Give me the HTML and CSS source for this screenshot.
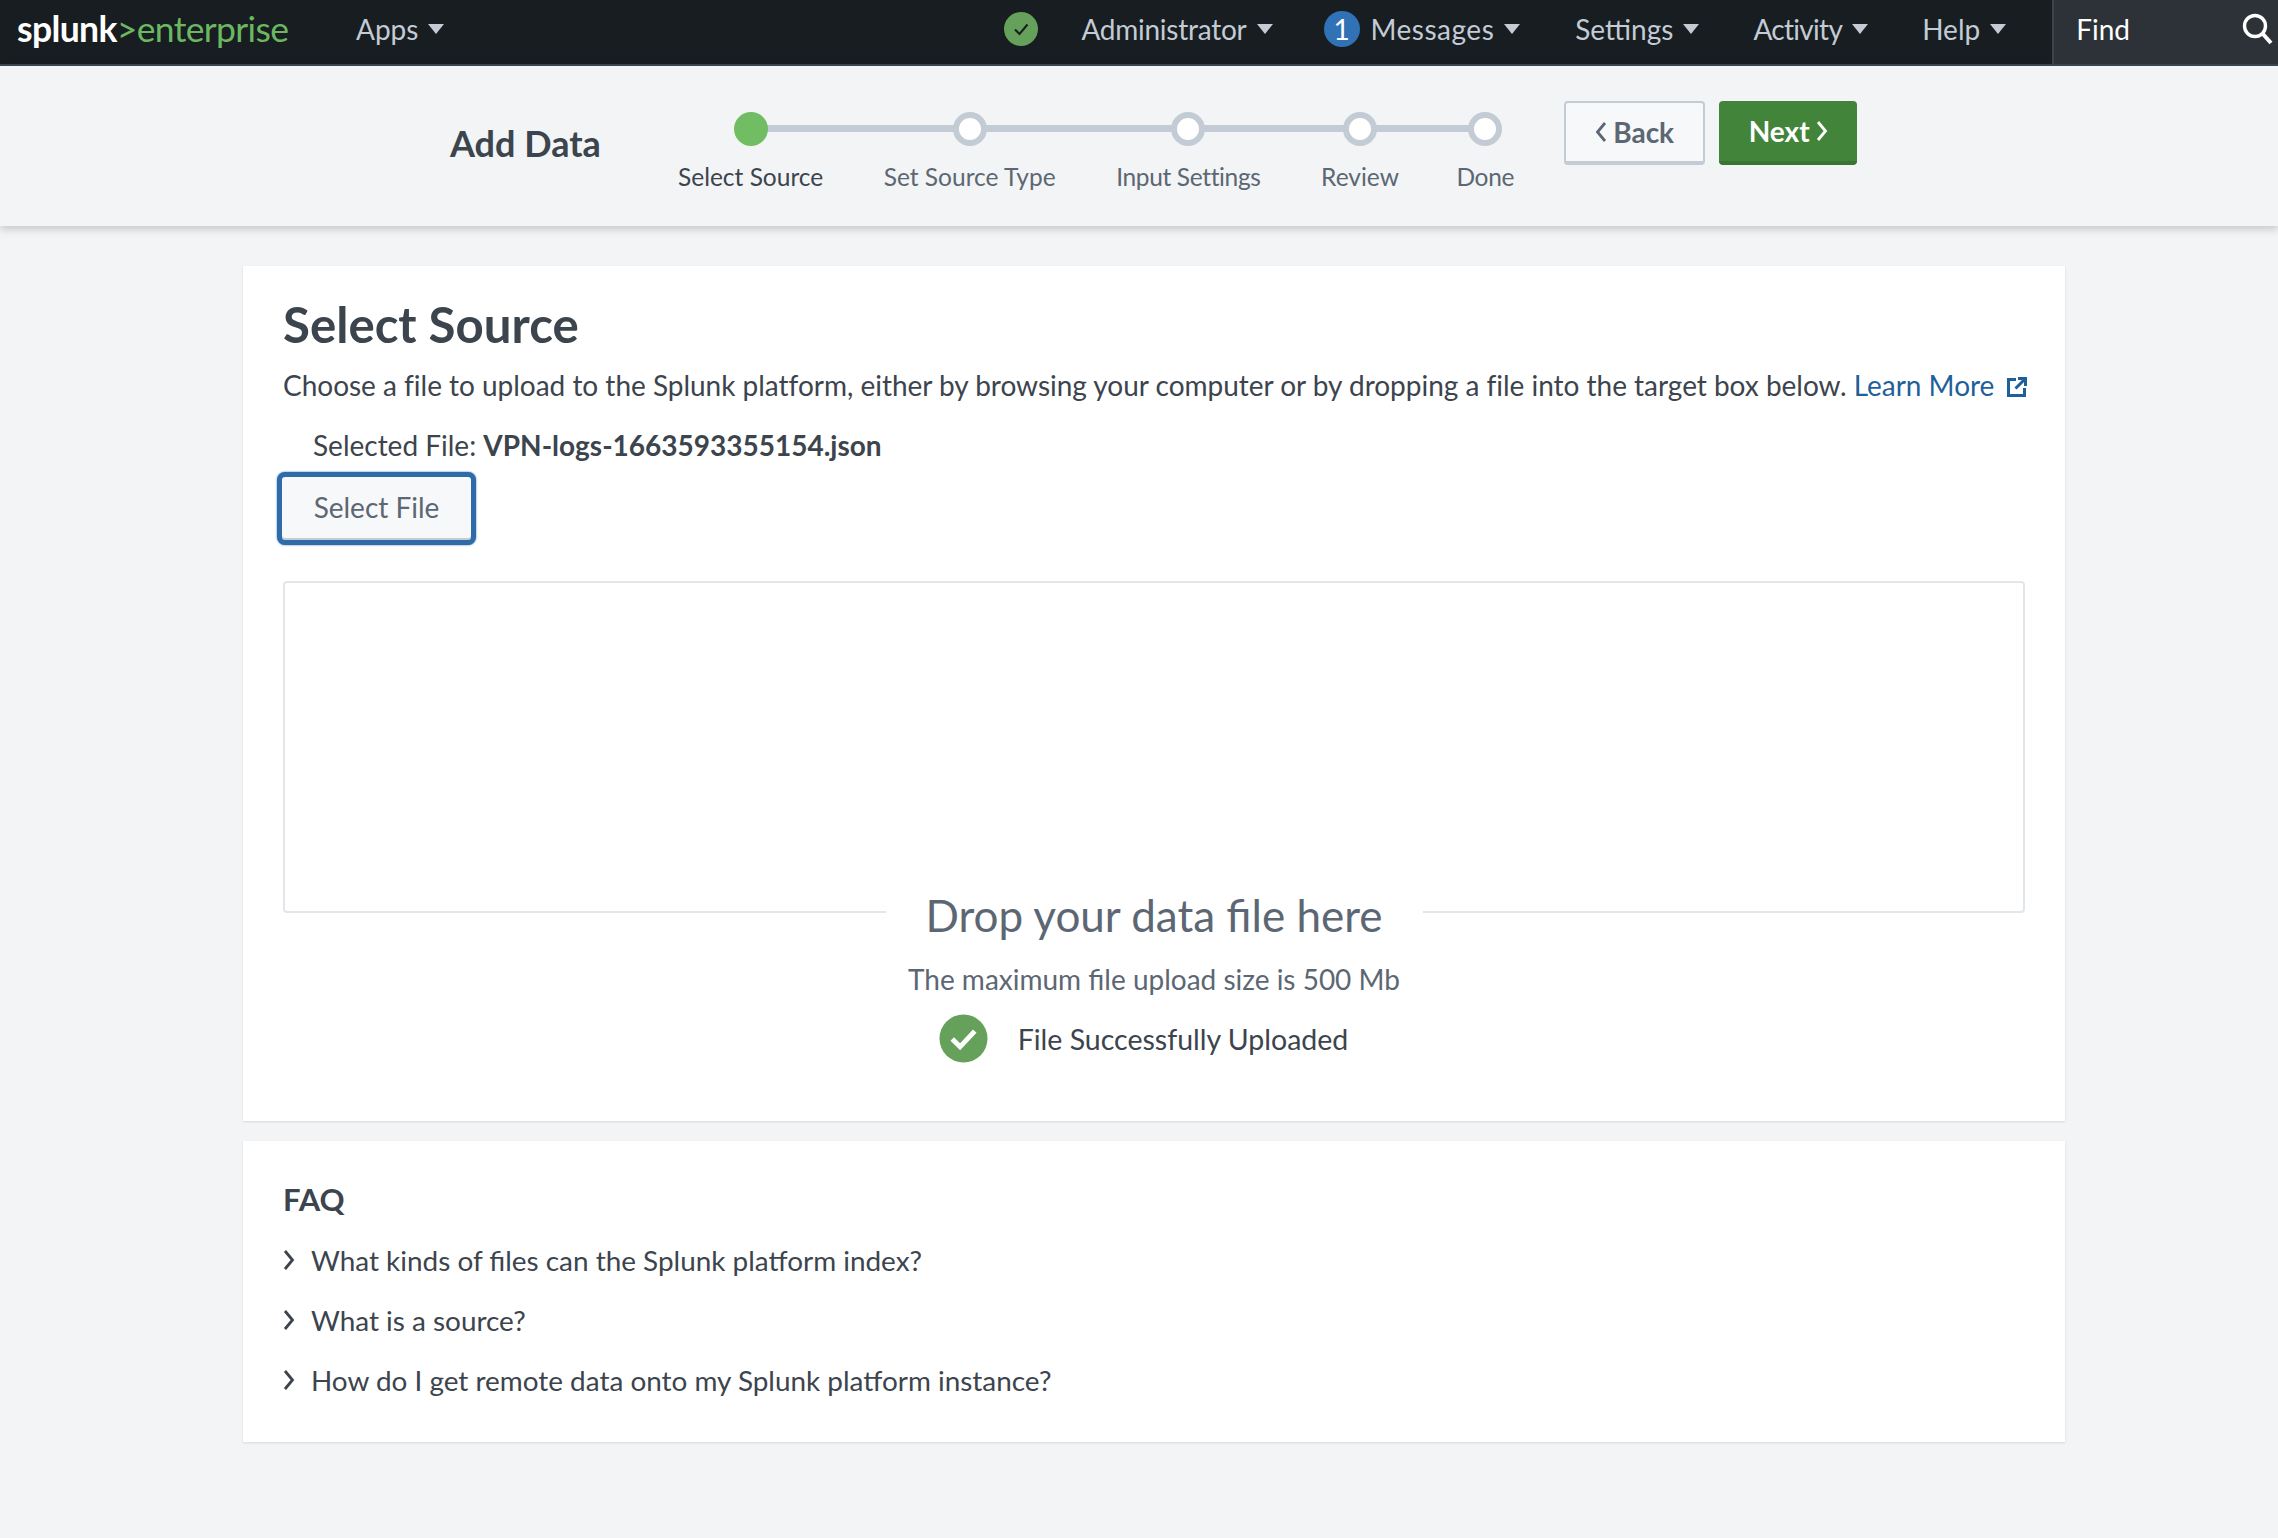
FILE: index.html
```html
<!DOCTYPE html>
<html lang="en">
<head>
    <meta charset="UTF-8">
    <title>Add Data - Splunk</title>
    <link rel="stylesheet" href="styles.css">
</head>
<body>

    <header class="topbar">
        <div class="logo">splunk<span class="logo-green">&gt;enterprise</span></div>
        <a class="nav-item nav-apps">Apps <i class="caret"></i></a>
        <div class="nav-right">
            <svg class="health" viewBox="0 0 34 34"><circle cx="17" cy="17" r="17" fill="#65a15b"/><path d="M11 17.5l4.5 4.5 8-9.5" fill="none" stroke="#171d21" stroke-width="2"/></svg>
            <a class="nav-item nav-admin">Administrator <i class="caret"></i></a>
            <span class="badge">1</span>
            <a class="nav-item nav-messages">Messages <i class="caret"></i></a>
            <a class="nav-item nav-settings">Settings <i class="caret"></i></a>
            <a class="nav-item nav-activity">Activity <i class="caret"></i></a>
            <a class="nav-item nav-help">Help <i class="caret"></i></a>
        </div>
        <div class="find">
            <span>Find</span>
            <svg class="find-icon" viewBox="0 0 32 32"><circle cx="13" cy="13" r="10.5" fill="none" stroke="#fff" stroke-width="3.4"/><path d="M20.5 20.5L29 30" stroke="#fff" stroke-width="4"/></svg>
        </div>
    </header>

    <div class="subbar">
        <h1 class="page-title">Add Data</h1>
        <ol class="steps">
            <li class="step step-active"><span class="dot"></span>Select Source</li>
            <li class="step"><span class="dot"></span>Set Source Type</li>
            <li class="step"><span class="dot"></span>Input Settings</li>
            <li class="step"><span class="dot"></span>Review</li>
            <li class="step step-last"><span class="dot"></span>Done</li>
        </ol>
        <div class="wizard-buttons">
            <button class="btn btn-back"><svg class="chev" viewBox="0 0 12 22"><path d="M10 2L2.5 11l7.5 9" fill="none" stroke="currentColor" stroke-width="2.8"/></svg>Back</button>
            <button class="btn btn-next">Next<svg class="chev" viewBox="0 0 12 22"><path d="M2 2l7.5 9L2 20" fill="none" stroke="currentColor" stroke-width="2.8"/></svg></button>
        </div>
    </div>

    <main class="content">
        <section class="card card-source">
            <h2>Select Source</h2>
            <p class="intro">Choose a file to upload to the Splunk platform, either by browsing your computer or by dropping a file into the target box below. <a class="learn">Learn More<svg class="ext" viewBox="0 0 20 20"><path d="M9 2.5H1.5v16h16V11M11 1.5h7.5V9M18 2L8.5 11.5" fill="none" stroke="currentColor" stroke-width="3"/></svg></a></p>
            <p class="selected">Selected File: <b>VPN-logs-1663593355154.json</b></p>
            <button class="btn-select">Select File</button>
            <div class="dropzone"></div>
            <div class="drop-text">
                <h3>Drop your data file here</h3>
                <p class="max-size">The maximum file upload size is 500 Mb</p>
                <div class="uploaded">
                    <svg class="ok" viewBox="0 0 50 50"><circle cx="25" cy="25" r="24.5" fill="#65a15b"/><path d="M13.5 25.5l8 8 15-16" fill="none" stroke="#fff" stroke-width="5"/></svg>
                    <span>File Successfully Uploaded</span>
                </div>
            </div>
        </section>

        <section class="card card-faq">
            <h4>FAQ</h4>
            <ul class="faq-list">
                <li><svg class="faq-chev" viewBox="0 0 12 22"><path d="M2 2l7.5 9L2 20" fill="none" stroke="currentColor" stroke-width="2.8"/></svg>What kinds of files can the Splunk platform index?</li>
                <li><svg class="faq-chev" viewBox="0 0 12 22"><path d="M2 2l7.5 9L2 20" fill="none" stroke="currentColor" stroke-width="2.8"/></svg>What is a source?</li>
                <li><svg class="faq-chev" viewBox="0 0 12 22"><path d="M2 2l7.5 9L2 20" fill="none" stroke="currentColor" stroke-width="2.8"/></svg>How do I get remote data onto my Splunk platform instance?</li>
            </ul>
        </section>
    </main>

</body>
</html>
```

FILE: styles.css
```css
* {
    box-sizing: border-box;
}
html, body {
    height: 100%;
}
body {
    margin: 0;
    background: #f2f4f5;
    color: #3c444d;
    font-family: Lato, "Open Sans", sans-serif;
    font-size: 28px;
    overflow: hidden;
}

/* top bar */
.topbar {
    display: flex;
    align-items: center;
    height: 66px;
    padding: 0 0 7px 17px;
    background: #171d21;
    border-bottom: 2px solid #3c444d;
    color: #c3cbd4;
}
.logo {
    width: 339px;
    font-size: 35.5px;
    letter-spacing: -0.65px;
    font-weight: 700;
    color: #fff;
}
.logo-green {
    color: #6cb861;
    font-weight: 400;
}
.nav-item {
    display: inline-flex;
    align-items: center;
    gap: 10px;
    white-space: nowrap;
}
.caret {
    width: 0;
    height: 0;
    border-left: 8px solid transparent;
    border-right: 8px solid transparent;
    border-top: 10px solid #c3cbd4;
}
.nav-right {
    display: flex;
    align-items: center;
    margin-left: 560px;
}
.health {
    width: 34px;
    height: 34px;
    margin-right: 43px;
}
.nav-admin {
    letter-spacing: -0.25px;
}
.badge {
    width: 36px;
    height: 36px;
    margin: 0 11px 0 51px;
    border-radius: 50%;
    background: #3072b5;
    color: #fff;
    text-align: center;
    line-height: 36px;
}
.nav-messages {
    letter-spacing: 0.5px;
}
.nav-settings {
    margin-left: 55px;
}
.nav-activity {
    margin-left: 54px;
    letter-spacing: -0.7px;
}
.nav-help {
    margin-left: 54px;
}
.find {
    display: flex;
    align-items: center;
    justify-content: space-between;
    align-self: flex-start;
    flex: 1;
    height: 64px;
    margin-left: 46px;
    padding: 0 4px 7px 22px;
    background: #2c3237;
    border-left: 2px solid #3c444d;
    color: #fff;
}
.find-icon {
    flex: none;
    width: 32px;
    height: 32px;
}

/* wizard bar */
.subbar {
    display: flex;
    align-items: flex-start;
    height: 160px;
    padding-left: 450px;
    background: #f2f4f5;
    box-shadow: 0 3px 8px rgba(60, 68, 77, 0.25);
}
.page-title {
    width: 228px;
    margin: 55px 0 0;
    font-size: 36px;
    line-height: 44px;
    font-weight: 700;
}
.steps {
    display: flex;
    gap: 60.5px;
    margin: 46px 0 0;
    padding: 0;
    list-style: none;
}
.step {
    position: relative;
    display: flex;
    flex-direction: column;
    align-items: center;
    gap: 16px;
    font-size: 24.5px;
    line-height: 30px;
    color: #5c6773;
    white-space: nowrap;
}
.step:nth-child(3) {
    letter-spacing: -0.35px;
}
.step-last {
    margin-left: -3px;
    letter-spacing: -0.3px;
}
.dot {
    position: relative;
    z-index: 1;
    width: 34px;
    height: 34px;
    border: 6px solid #c3cbd4;
    border-radius: 50%;
    background: #fff;
}
/* line to the next step */
.step::after {
    content: "";
    position: absolute;
    left: 50%;
    top: 13px;
    width: 216px;
    height: 7px;
    background: #c3cbd4;
}
.step-last::after {
    display: none;
}
.step:nth-child(3)::after {
    width: 170px;
}
.step:nth-child(4)::after {
    width: 124px;
}
.step-active {
    color: #3c444d;
}
.step-active .dot {
    border: 0;
    background: #70bd64;
}
.wizard-buttons {
    display: flex;
    gap: 14px;
    margin: 35px 0 0 50px;
}
.btn {
    display: flex;
    align-items: center;
    justify-content: center;
    gap: 6px;
    height: 64px;
    border-radius: 4px;
    font-family: inherit;
    font-size: 28px;
    font-weight: 700;
}
.btn-back {
    width: 141px;
    background: #f7f8fa;
    border: 2px solid #c3cbd4;
    border-bottom-width: 4px;
    color: #5c6773;
}
.btn-next {
    width: 138px;
    background: #42853a;
    border: 0;
    border-bottom: 4px solid #3a7532;
    color: #fff;
}
.chev {
    width: 12px;
    height: 22px;
}

/* cards */
.content {
    display: flex;
    flex-direction: column;
    gap: 20px;
    width: 1822px;
    margin: 40px 0 0 243px;
}
.card {
    padding: 0 40px;
    background: #fff;
    box-shadow: 0 1px 2px rgba(60, 68, 77, 0.15);
}
.card-source {
    height: 855px;
}
.card-source h2 {
    margin: 0;
    padding-top: 29px;
    font-size: 49.2px;
    line-height: 58px;
    font-weight: 700;
}
.intro {
    margin: 14px 0 0;
    line-height: 36px;
    letter-spacing: -0.02px;
    white-space: nowrap;
}
.learn {
    color: #1f5f9a;
}
.ext {
    width: 20px;
    height: 20px;
    margin-left: 13px;
    vertical-align: -1px;
}
.selected {
    margin: 24px 0 0 30px;
    line-height: 36px;
}
.selected b {
    font-weight: 700;
}
.btn-select {
    display: block;
    width: 199px;
    height: 73px;
    margin: 9px 0 0 -6px;
    padding: 0 0 3px;
    background: #f7f8fa;
    border: 5px solid #2f6ba8;
    border-radius: 8px;
    box-shadow: inset 0 -2px 0 #c3cbd4, 0 0 2px #2f6ba8;
    font-family: inherit;
    font-size: 28px;
    color: #5c6773;
}
.dropzone {
    height: 332px;
    margin-top: 36px;
    background: #fff;
    border: 2px solid #e1e6eb;
    border-radius: 4px;
}
.drop-text {
    display: flex;
    flex-direction: column;
    align-items: center;
}
.drop-text h3 {
    width: 537px;
    margin: -23px 0 0;
    background: #fff;
    text-align: center;
    font-size: 44px;
    line-height: 50px;
    font-weight: 400;
    color: #5c6773;
}
.max-size {
    margin: 21px 0 0;
    line-height: 36px;
    color: #5c6773;
}
.uploaded {
    display: flex;
    align-items: center;
    gap: 30px;
    margin: 17px 21px 0 0;
    font-size: 28.5px;
}
.ok {
    width: 49px;
    height: 49px;
}
.card-faq {
    height: 301px;
    padding-top: 39px;
}
.card-faq h4 {
    margin: 0;
    font-size: 31px;
    line-height: 38px;
    font-weight: 700;
}
.faq-list {
    display: flex;
    flex-direction: column;
    gap: 24px;
    margin: 23.5px 0 0;
    padding: 0;
    list-style: none;
    font-size: 27.9px;
}
.faq-list li {
    display: flex;
    align-items: center;
    gap: 16px;
    line-height: 36px;
}
.faq-chev {
    width: 12px;
    height: 22px;
}
```
